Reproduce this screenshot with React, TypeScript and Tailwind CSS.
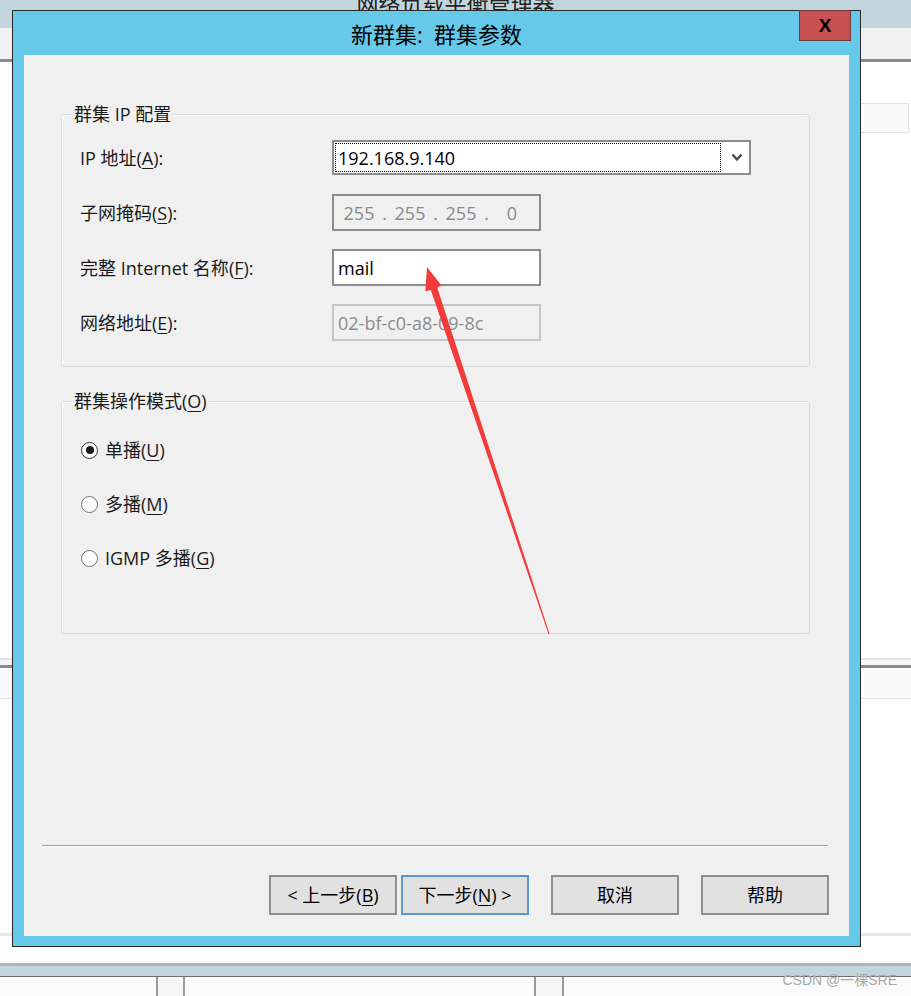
const fields = [
  { label: "IP 地址", key: "A", kind: "combo", value: "192.168.9.140" },
  { label: "子网掩码", key: "S", kind: "mask", value: "" },
  { label: "完整 Internet 名称", key: "F", kind: "text", value: "mail" },
  { label: "网络地址", key: "E", kind: "readonly", value: "02-bf-c0-a8-09-8c" },
];

const modes = [
  { label: "单播", key: "U", checked: true },
  { label: "多播", key: "M", checked: false },
  { label: "IGMP 多播", key: "G", checked: false },
];

function Mnemonic({ label, k, colon }: { label: string; k: string; colon?: boolean }) {
  return (
    <span>
      {label}(<span className="underline underline-offset-[3px] decoration-1">{k}</span>){colon ? ":" : ""}
    </span>
  );
}

function Field({ f }: { f: (typeof fields)[number] }) {
  if (f.kind === "combo") {
    return (
      <div className="w-[419px] h-[35px] bg-white border-2 border-[#8c8c8c] flex items-center p-px">
        <div className="w-[386px] h-full border border-dotted border-black flex items-center pl-[2px] text-black">
          {f.value}
        </div>
        <svg className="ml-auto mr-[5px]" width="12" height="9" viewBox="0 0 12 9">
          <path d="M1.5 1.5 L6 6.5 L10.5 1.5" fill="none" stroke="#4a4a4a" strokeWidth="2.4" />
        </svg>
      </div>
    );
  }
  if (f.kind === "mask") {
    const parts = ["255", "255", "255", "0"];
    return (
      <div className="w-[209px] h-[37px] bg-[#f0f0f0] border-2 border-[#8c8c8c] flex items-center pl-[6px] text-[#8a8a8a]">
        {parts.map((p, i) => (
          <div key={i} className="flex">
            <span className="w-[38px] text-center">{p}</span>
            {i < 3 && <span className="w-[13px] text-center">.</span>}
          </div>
        ))}
      </div>
    );
  }
  if (f.kind === "text") {
    return (
      <div className="w-[209px] h-[37px] bg-white border-2 border-[#8c8c8c] flex items-center pl-[4px] text-black">
        {f.value}
      </div>
    );
  }
  return (
    <div className="w-[209px] h-[37px] bg-[#f0f0f0] border-2 border-[#c6c6c6] flex items-center pl-[4px] text-[#8d8d8d]">
      {f.value}
    </div>
  );
}

function GroupBox({ title, className, children }: { title: React.ReactNode; className: string; children: React.ReactNode }) {
  return (
    <div
      className={`relative ml-[37px] w-[749px] border border-[#d6dde3] rounded-[3px] shadow-[inset_1px_1px_0_#ffffff] ${className}`}
    >
      <span className="absolute -top-[13px] left-[10px] px-[2px] bg-[#f0f0f0] leading-[24px] text-[#1a1a1a]">
        {title}
      </span>
      {children}
    </div>
  );
}

function Radio({ checked }: { checked: boolean }) {
  return (
    <span
      className={`w-[17px] h-[17px] rounded-full bg-white border flex items-center justify-center ${
        checked ? "border-[#333333]" : "border-[#6f6f6f]"
      }`}
    >
      {checked && <span className="w-[8px] h-[8px] rounded-full bg-[#1c1c1c]" />}
    </span>
  );
}

function Button({ children, focused }: { children: React.ReactNode; focused?: boolean }) {
  return (
    <div
      className={`w-[128px] h-[40px] bg-[#e1e1e1] border-2 flex items-center justify-center text-black ${
        focused ? "border-[#5598d3]" : "border-[#8f8f8f]"
      }`}
    >
      {children}
    </div>
  );
}

function BackgroundWindow() {
  return (
    <div className="flex flex-col h-full">
      <div className="h-[28px] bg-[#c3d5dc] flex justify-center overflow-hidden">
        <span className="-mt-[9px] text-[22px] leading-[24px] text-[#222222]">网络负载平衡管理器</span>
      </div>
      <div className="h-[31px] bg-[#f0f0f0]" />
      <div className="h-[3px] bg-[#8a8a8a]" />
      <div className="h-[41px]" />
      <div className="h-[30px] flex justify-end pr-[2px]">
        <div className="w-[320px] border border-[#e2e2e2] bg-[#fafafa]" />
      </div>
      <div className="h-[525px]" />
      <div className="h-[2px] bg-[#e4e4e4]" />
      <div className="h-[5px] bg-[#f7f7f7]" />
      <div className="h-[3px] bg-[#8a8a8a]" />
      <div className="h-[30px] bg-[#fafafa]" />
      <div className="h-px bg-[#e5e5e5]" />
      <div className="h-[234px]" />
      <div className="h-[3px] bg-[#e8e8e8]" />
      <div className="h-[27px]" />
      <div className="h-[3px] bg-[#b4b4b4]" />
      <div className="h-[10px] bg-[#c3d5dc]" />
      <div className="h-px bg-[#6e6e6e]" />
      <div className="flex-1 flex bg-[#fbfbfb]">
        <div className="w-[156px]" />
        <div className="w-[29px] border-x-2 border-[#9a9a9a] bg-[#f6f6f6]" />
        <div className="w-[349px]" />
        <div className="w-[30px] border-x-2 border-[#9a9a9a] bg-[#f6f6f6]" />
        <div className="flex-1" />
      </div>
    </div>
  );
}

function Dialog() {
  return (
    <div className="absolute left-[12px] top-[10px] w-[849px] h-[937px] border border-[#2a2a2a] bg-[#66c9ea] flex flex-col">
      <div className="h-[44px] grid grid-cols-[1fr_auto_1fr] items-start">
        <div />
        <div className="pt-[9px] text-[22px] leading-[28px] text-black whitespace-pre">新群集:  群集参数</div>
        <div className="flex justify-end pr-[9px]">
          <div className="-mt-px w-[52px] h-[31px] bg-[#c75050] border border-[#6e3a36] flex items-center justify-center text-[19px] leading-none font-bold text-black font-['Liberation_Sans',sans-serif]">
            X
          </div>
        </div>
      </div>

      <div className="mx-[11px] mb-[10px] flex-1 bg-[#f0f0f0] flex flex-col">
        <GroupBox title="群集 IP 配置" className="mt-[59px] h-[253px] pt-[15px] pl-[18px]">
          {fields.map((f) => (
            <div key={f.key} className="h-[55px] flex items-center">
              <div className="w-[252px] text-[#1a1a1a]">
                <Mnemonic label={f.label} k={f.key} colon />
              </div>
              <Field f={f} />
            </div>
          ))}
        </GroupBox>

        <GroupBox title={<Mnemonic label="群集操作模式" k="O" />} className="mt-[34px] h-[233px] pt-[21px] pl-[19px]">
          {modes.map((m) => (
            <div key={m.key} className="h-[54px] flex items-center gap-[7px] text-[#1a1a1a]">
              <Radio checked={m.checked} />
              <Mnemonic label={m.label} k={m.key} />
            </div>
          ))}
        </GroupBox>

        <div className="mt-[211px] ml-[18px] w-[786px] h-px bg-[#a0a0a0]" />
        <div className="ml-[18px] w-[786px] h-px bg-white" />

        <div className="mt-[28px] ml-[245px] flex">
          <Button>
            <span>
              &lt; 上一步(<span className="underline underline-offset-[3px]">B</span>)
            </span>
          </Button>
          <div className="ml-[4px]">
            <Button focused>
              <span>
                下一步(<span className="underline underline-offset-[3px]">N</span>) &gt;
              </span>
            </Button>
          </div>
          <div className="ml-[22px]">
            <Button>取消</Button>
          </div>
          <div className="ml-[22px]">
            <Button>帮助</Button>
          </div>
        </div>
      </div>
    </div>
  );
}

function Arrow() {
  return (
    <svg className="absolute inset-0 pointer-events-none" width="911" height="996" viewBox="0 0 911 996">
      <polygon
        points="427,267 441.5,285.5 437.2,287.6 549.6,634 548.6,634.2 430.8,290 425.4,291.2"
        fill="#f23b3b"
      />
    </svg>
  );
}

export default function App() {
  return (
    <div className="relative w-[911px] h-[996px] overflow-hidden bg-white text-[18px] leading-[24px] font-['Open_Sans','Noto_Sans_CJK_SC',sans-serif]">
      <BackgroundWindow />
      <Dialog />
      <Arrow />
      <span className="absolute right-[14px] bottom-[8px] text-[14px] leading-[16px] text-[#a8a8a8] font-['Liberation_Sans','Noto_Sans_CJK_SC',sans-serif]">
        CSDN @一棵SRE
      </span>
    </div>
  );
}
